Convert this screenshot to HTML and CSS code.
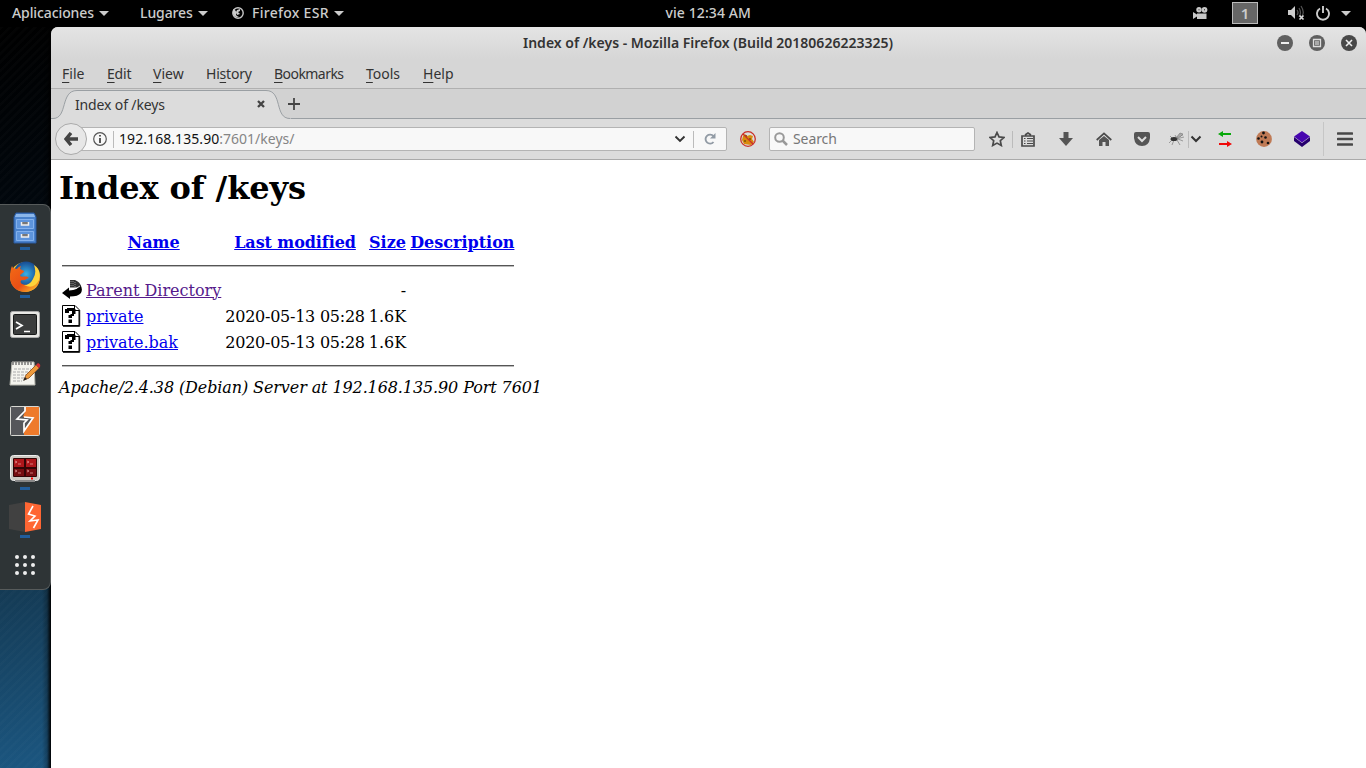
FILE: index.html
```html
<!DOCTYPE html>
<html lang="es">
<head>
<meta charset="utf-8">
<title>Index of /keys</title>
<link rel="stylesheet" href="styles.css">
</head>
<body>
<div class="desktop">
<header class="topbar">
  <div class="panel-left">
    <span class="panel-item apps">Aplicaciones<i class="caret"></i></span>
    <span class="panel-item places">Lugares<i class="caret"></i></span>
    <span class="panel-item current"><svg class="ff-mini" width="12" height="12" viewBox="0 0 12 12"><circle cx="6" cy="6" r="5.2" fill="none" stroke="#c8c8c8" stroke-width="1.4"/><path d="M1 3C0 9 4 11 7 10C4 9 3 7 5 6L3 3L1 2Z" fill="#ccc"/><path d="M5 3L8 2L8 4L6 5L8 7L5 8L4 5Z" fill="#ccc"/></svg><span>Firefox ESR</span><i class="caret"></i></span>
  </div>
  <div class="clock">vie 12:34 AM</div>
  <div class="panel-right">
    <svg class="cam" width="17" height="14" viewBox="0 0 17 14" fill="#c8c8c8"><circle cx="7" cy="3.800" r="2.700"/><circle cx="12.500" cy="3.800" r="2.900"/><path d="M5 7.500H14.500V13H5V10.500L1 13V6L5 8.500Z"/><path d="M6.500 3.800h1M12 3.800h1" stroke="#222"/></svg>
    <span class="workspace">1</span>
    <svg class="vol" width="18" height="16" viewBox="0 0 18 16"><path d="M1 5H4L8 1V14L4 10H1Z" fill="#ccc"/><path d="M10 5Q12 7.500 10 10M12 3Q15 7.500 12 12M14 1Q18 7 15 11" fill="none" stroke="#555" stroke-width="1.2"/><path d="M12.500 10.500L16.500 14.500M16.500 10.500L12.500 14.500" stroke="#ddd" stroke-width="1.7"/></svg>
    <svg class="power" width="14" height="15" viewBox="0 0 14 15"><path d="M4 2.500A6 6 0 1 0 10 2.500M7 0V7" fill="none" stroke="#ccc" stroke-width="1.9"/></svg>
    <i class="caret"></i>
  </div>
</header>
<div class="work">
<aside class="side">
 <nav class="dock">
  <div class="slot on"><svg class="files" width="24" height="32" viewBox="0 0 24 32"><path d="M3 1H21L23 5V31H1V5Z" fill="#4a82cc" stroke="#2858a0"/><path d="M3 2H21L22 5H2Z" fill="#8bb6ea"/><path d="M3.500 7.500H20.500V16.500H3.500ZM3.500 19.500H20.500V28.500H3.500Z" fill="#5d94dc" stroke="#83b1ed"/><path d="M8.500 10V13H15.500V10M8.500 22V25H15.500V22" fill="#777" stroke="#eee" stroke-width="1.5"/></svg></div>
  <div class="slot on"><svg width="32" height="32" viewBox="0 0 32 32"><defs><linearGradient id="fox" x2="1" y2="1"><stop stop-color="#f36a15"/><stop offset=".55" stop-color="#e94f16"/><stop offset="1" stop-color="#ffd231"/></linearGradient><radialGradient id="globe"><stop stop-color="#39b1e6"/><stop offset="1" stop-color="#174a91"/></radialGradient></defs><circle cx="16" cy="16" r="14.800" fill="#ffc52c"/><circle cx="17" cy="13" r="12.500" fill="url(#globe)"/><path d="M3 5Q1 9 1 17C2 27 9 31 17 31C26 30 31 24 31 16C28 24 22 26 17 24C12 24 10 20 13 19C17 20 18 17 20 17C17 14 14 17 11 15C12 12 15 12 15 10L11 8L12 5Q9 6 8 8L4 7Z" fill="url(#fox)"/><path d="M25 4Q28 12 24 18Q21 24 15 24Q25 29 30 19Q33 9 25 4Z" fill="#ffd43a"/></svg></div>
  <div class="slot"><svg class="term" width="30" height="27" viewBox="0 0 30 27"><rect x=".5" y=".5" width="29" height="26" rx="2" fill="#e8e8e5" stroke="#aaa"/><rect x="3.500" y="3.500" width="23" height="20" rx="1" fill="#3b3d3d" stroke="#171919"/><path d="M6 11L12 14.500L6 18M14 20.500H20" fill="none" stroke="#fff" stroke-width="1.700"/></svg></div>
  <div class="slot"><svg width="32" height="26" viewBox="0 0 32 26"><path d="M3 2H25L26 25H1Z" fill="#f4f4ee" stroke="#b8b8b0"/><path d="M4 1V5M7 1V5M10 1V5M13 1V5M16 1V5M19 1V5M22 1V5" stroke="#777" stroke-width="1.500"/><path d="M5 9H22M4 12H21M4 15H18M4 18H15M4 21H13" stroke="#aaa" stroke-dasharray="3 1"/><path d="M15 20L17 15L27 5L30 8L20 18Z" fill="#ed9a3b" stroke="#9c602d"/><path d="M27 5L29 3Q32 4 31 7L30 8Z" fill="#d42d32"/><path d="M14 21L16 17L18 19Z" fill="#222"/></svg></div>
  <div class="slot"><svg width="30" height="30" viewBox="0 0 30 30"><path d="M1 1H29V29H1Z" fill="#ee7a2b"/><path d="M1 1H15V5L13 11L23 12L14 25V29H1Z" fill="#55565a"/><path d="M15 1V5L7 13L17 14L14 17V25L23 12L14 11" fill="none" stroke="#fff" stroke-width="1.700"/><rect x=".5" y=".5" width="29" height="29" rx="1" fill="none" stroke="#d7d7d2"/></svg></div>
  <div class="slot on"><svg width="30" height="28" viewBox="0 0 30 28"><rect x=".5" y=".5" width="29" height="25" rx="3" fill="#ccc9c2" stroke="#eee"/><rect x="3" y="3" width="24" height="19" rx="1" fill="#330506"/><path d="M4 4H14V12H4ZM16 4H26V12H16Z" fill="#ad171b"/><path d="M4 14H14V21H4ZM16 14H26V21H16Z" fill="#750d10"/><path d="M5 6L7 7L5 8M8 9H11M17 6L19 7L17 8M20 9H23M5 15L7 16L5 17M8 18H11M17 15L19 16L17 17M20 18H23" fill="none" stroke="#eba8a8" stroke-width=".7"/><path d="M5 26H25" stroke="#888" stroke-width="2"/><path d="M21 23.500H23" stroke="#f00" stroke-width="2"/></svg></div>
  <div class="slot on"><svg width="32" height="30" viewBox="0 0 32 30"><path d="M0 3L16 0V30L0 27Z" fill="#414141"/><path d="M16 0L32 3V27L16 30Z" fill="#ff6633"/><path d="M24 4L19.500 12L26 14L21 19L29 18L24.500 26" fill="none" stroke="#fff" stroke-width="1.600"/></svg></div>
  <div class="slot"><svg width="20" height="20" viewBox="0 0 20 20" fill="#eee"><circle cx="2" cy="2" r="2"/><circle cx="10" cy="2" r="2"/><circle cx="18" cy="2" r="2"/><circle cx="2" cy="10" r="2"/><circle cx="10" cy="10" r="2"/><circle cx="18" cy="10" r="2"/><circle cx="2" cy="18" r="2"/><circle cx="10" cy="18" r="2"/><circle cx="18" cy="18" r="2"/></svg></div>
 </nav>
</aside>
<main class="window">
 <div class="titlebar"><span class="title">Index of /keys - Mozilla Firefox (Build 20180626223325)</span>
  <div class="controls"><svg viewBox="0 0 16 16"><circle cx="8" cy="8" r="8" fill="#606060"/><path d="M4 8H12" stroke="#eee" stroke-width="2"/></svg><svg viewBox="0 0 16 16"><circle cx="8" cy="8" r="8" fill="#606060"/><path d="M4.500 4.500H11.500V11.500H4.500Z" fill="none" stroke="#ddd" stroke-width="1.300"/><path d="M6 6H10V10H6Z" fill="#aaa"/></svg><svg viewBox="0 0 16 16"><circle cx="8" cy="8" r="8" fill="#484848"/><path d="M5 5L11 11M11 5L5 11" stroke="#eee" stroke-width="1.600"/></svg></div>
 </div>
 <nav class="menubar"><span class="m1"><u>F</u>ile</span><span class="m2"><u>E</u>dit</span><span class="m3"><u>V</u>iew</span><span class="m4">Hi<u>s</u>tory</span><span class="m5"><u>B</u>ookmarks</span><span class="m6"><u>T</u>ools</span><span class="m7"><u>H</u>elp</span></nav>
 <div class="tabs"><div class="tab">
   <svg class="tab-shape" width="240" height="32" viewBox="0 0 240 32"><path d="M0 30.500H2C17 30.500 9 2.500 26 2.500H215C232 2.500 223 30.500 239 30.500H240V32H0Z" fill="#dcdcdc"/><path d="M0 30.500H2C17 30.500 9 2.500 26 2.500H215C232 2.500 223 30.500 239 30.500" fill="none" stroke="#9a9fa3"/></svg>
   <span class="tab-label">Index of /keys</span><svg class="tab-close" width="8" height="8" viewBox="0 0 8 8"><path d="M1 1L7 7M7 1L1 7" stroke="#444" stroke-width="2.300"/></svg></div>
   <svg class="plus" width="12" height="12" viewBox="0 0 12 12"><path d="M6 0V12M0 6H12" stroke="#444" stroke-width="1.800"/></svg></div>
 <div class="toolbar">
  <span class="back"><svg width="14" height="14" viewBox="0 0 14 14"><path d="M7 1L2 7L7 13M2 7H14" fill="none" stroke="#444" stroke-width="3.400"/></svg></span>
  <div class="url"><svg class="info" width="14" height="14" viewBox="0 0 14 14"><circle cx="7" cy="7" r="6.300" fill="none" stroke="#555" stroke-width="1.200"/><path d="M7 6V11M7 3V4.600" stroke="#444" stroke-width="1.800"/></svg><i class="sep"></i><span class="address-text"><b>192.168.135.90</b>:7601/keys/</span><svg class="drop" width="12" height="8" viewBox="0 0 12 8"><path d="M1.500 1.500L6 6L10.500 1.500" fill="none" stroke="#333" stroke-width="1.900"/></svg><i class="sep"></i><svg class="reload" width="12" height="12" viewBox="0 0 12 12"><path d="M9.500 9A4.500 4.500 0 1 1 9.500 3.200" fill="none" stroke="#929ba5" stroke-width="1.900"/><path d="M11.500 0V5.500H6Z" fill="#929ba5"/></svg></div>
  <svg class="blocked" width="16" height="16" viewBox="0 0 16 16"><path d="M3 5L5 3L7 5L10 4L13 5L12 8L14 11L11 14L4 13L2 9Z" fill="#d98a0d"/><path d="M5 5H7M9 8H11M4 10H6" stroke="#795109" stroke-width="1.500"/><circle cx="8" cy="8" r="7.300" fill="none" stroke="#cb3029" stroke-width="1.300"/><path d="M3 3L13 13" stroke="#cb3029" stroke-width="1.300"/></svg>
  <div class="search"><svg width="14" height="14" viewBox="0 0 14 14"><circle cx="5.500" cy="5.500" r="4.300" fill="none" stroke="#999" stroke-width="2"/><path d="M8.500 8.500L13 13" stroke="#999" stroke-width="2.500"/></svg><span>Search</span></div>
  <div class="tools">
   <svg class="star" width="16" height="16" viewBox="0 0 16 16"><path d="M8 1.500L10 5.900L15 6.400L11.300 9.700L12.300 14.500L8 12.100L3.700 14.500L4.700 9.700L1 6.400L6 5.900Z" fill="none" stroke="#4a4a4a" stroke-width="1.700"/></svg><i class="sep"></i>
   <svg class="list" width="14" height="15" viewBox="0 0 14 15"><path d="M1 4H13V14H1ZM4 3L7 1L10 3" fill="none" stroke="#4a4a4a" stroke-width="1.700"/><path d="M3 6.500H4.500M6 6.500H12M3 9H4.500M6 9H12M3 11.500H4.500M6 11.500H12" stroke="#4a4a4a" stroke-width="1.200"/></svg>
   <svg class="down" width="14" height="14" viewBox="0 0 14 14"><path d="M4.500 0H9.500V6H14L7 14L0 6H4.500Z" fill="#555"/></svg>
   <svg class="home" width="16" height="15" viewBox="0 0 16 15"><path d="M.7 8L8 1.300L15.300 8" fill="none" stroke="#4a4a4a" stroke-width="1.700"/><path d="M3 8L8 4L13 8V14H9.500V10H6.500V14H3Z" fill="#555"/></svg>
   <svg class="pocket" width="16" height="14" viewBox="0 0 16 14"><path d="M2 0H14Q16 0 16 2V6Q15 14 8 14Q1 14 0 6V2Q0 0 2 0Z" fill="#555"/><path d="M4 5L8 9L12 5" fill="none" stroke="#ddd" stroke-width="2"/></svg>
   <svg class="fly" width="16" height="14" viewBox="0 0 16 14"><path d="M3 8L8 5L14 3M7 7L15 5M1 4L4 7L0 11M5 8L3 13M8 8L11 13M9 7L14 9M7 5L6 3" fill="none" stroke="#888" stroke-width=".8"/><ellipse cx="5" cy="7" rx="3.500" ry="2" fill="#333"/><path d="M7 6L11 1L14 2L11 5Z" fill="#aaa" stroke="#777" stroke-width=".6"/></svg><i class="sep small"></i>
   <svg class="chev" width="12" height="8" viewBox="0 0 12 8"><path d="M1.500 1.500L6 6L10.500 1.500" fill="none" stroke="#333" stroke-width="2"/></svg>
   <svg class="arrows" width="14" height="16" viewBox="0 0 14 16"><path d="M0 3L5 0V2H13V4H5V6Z" fill="#09a90c"/><path d="M14 13L9 10V12H1V14H9V16Z" fill="#ef0909"/></svg>
   <svg class="cookie" width="16" height="16" viewBox="0 0 16 16" fill="#111"><circle cx="8" cy="8" r="7.900" fill="#bf7a55"/><circle cx="7.500" cy="2" r="1.400"/><circle cx="2.500" cy="7.500" r="1.300"/><circle cx="9.500" cy="6.500" r="1.300"/><circle cx="6" cy="11" r="1.400"/><circle cx="12" cy="12" r="1.300"/><circle cx="5.500" cy="5.500" r="1"/></svg>
   <svg class="cube" width="16" height="16" viewBox="0 0 16 16"><path d="M0 6L8 12L16 6V10L8 16L0 10Z" fill="#26006e"/><path d="M8 0L16 5.500L8 11.500L0 5.500Z" fill="#4705af"/></svg>
   <i class="sep tall"></i><svg class="burger" width="16" height="14" viewBox="0 0 16 14"><path d="M1 1.500H15M1 7H15M1 12.500H15" stroke="#484848" stroke-width="2.700" stroke-linecap="round"/></svg>
  </div>
 </div>
 <section class="page">
  <h1>Index of /keys</h1>
  <table>
   <tr><th class="icon-cell"></th><th><a href="#">Name</a></th><th><a class="modified" href="#">Last modified</a></th><th><a href="#">Size</a></th><th><a href="#">Description</a></th></tr>
   <tr><td colspan="5"><hr></td></tr>
   <tr><td class="icon-cell"><svg width="20" height="22" viewBox="0 0 20 22"><path d="M0 14L7 8.500V11.500Q16 11 18.500 6Q21 10 19 14Q16 17.500 8 17.500V20Z"/><path d="M8 1H13Q18 3 19 7L17 9L14 8.500L8 8.500Z" fill="#333"/><path d="M9 2V8M11 2V8M13 3V8" stroke="#aaa" stroke-width=".8" stroke-dasharray="1 1"/><path d="M9 10.300Q15 10 18 7" stroke="#fff" stroke-width=".8" fill="none"/></svg></td><td><a class="visited" href="#">Parent Directory</a></td><td></td><td class="num">-</td><td></td></tr>
   <tr><td class="icon-cell"><svg width="20" height="22" viewBox="0 0 20 22"><path d="M.5 .5H13L17 4.500V20.500H.5V.5Z" fill="#fff" stroke="#000"/><path d="M12.500 1V5.500H17M1 21.300H17.700V5" fill="none" stroke="#000"/><path d="M3 4H5V3H12V4H13.500V9H12V11H10V13H6.500V10H8.500V9H10V6H7V8H3ZM6.500 14.500H10V18H6.500Z"/></svg></td><td><a href="#">private</a></td><td class="num date">2020-05-13 05:28</td><td class="num">1.6K</td><td></td></tr>
   <tr><td class="icon-cell"><svg width="20" height="22" viewBox="0 0 20 22"><path d="M.5 .5H13L17 4.500V20.500H.5V.5Z" fill="#fff" stroke="#000"/><path d="M12.500 1V5.500H17M1 21.300H17.700V5" fill="none" stroke="#000"/><path d="M3 4H5V3H12V4H13.500V9H12V11H10V13H6.500V10H8.500V9H10V6H7V8H3ZM6.500 14.500H10V18H6.500Z"/></svg></td><td><a href="#">private.bak</a></td><td class="num date">2020-05-13 05:28</td><td class="num">1.6K</td><td></td></tr>
   <tr><td colspan="5"><hr></td></tr>
  </table>
  <address>Apache/2.4.38 (Debian) Server at 192.168.135.90 Port 7601</address>
 </section>
</main>
</div>
</div>
</body>
</html>
```

FILE: styles.css
```css
*{box-sizing:border-box}
body{margin:0;background:#000;font:14px/20px "Noto Sans","Open Sans",sans-serif;overflow:hidden}
svg{display:block;flex:none}
.desktop{width:1366px;height:768px;display:flex;flex-direction:column}
.topbar{height:27px;flex:none;background:#000;color:#ccc;display:grid;grid-template-columns:1fr auto 1fr;align-items:center;font-weight:500;padding-bottom:1px}
.panel-left{display:flex;padding-left:12px}
.panel-item{display:flex;align-items:center;white-space:nowrap}
.apps{width:128px;letter-spacing:-.1px}.places{width:92px;letter-spacing:-.1px}
.current{letter-spacing:.28px}
.ff-mini{margin-right:8px}
.caret{border:5px solid transparent;border-top-color:#ccc;border-bottom:0;margin-left:5px;flex:none}
.clock{width:86px;margin-left:51px;white-space:nowrap;letter-spacing:.1px}
.panel-right{display:flex;align-items:center;justify-content:flex-end;padding-right:15px}
.workspace{width:26px;height:22px;border:1px solid #bbb;background:#666;text-align:center;margin:0 29px 0 23px;font-size:15px;font-weight:600}
.vol{margin-right:11px}.panel-right .caret{margin-left:11px}
.work{display:flex;flex:1;min-height:0}
.side{width:51px;flex:none;padding-top:177px;background:linear-gradient(90deg,transparent 42px,rgba(0,0,0,.25) 47px,#000 51px),repeating-linear-gradient(135deg,rgba(255,255,255,.015) 0 2px,transparent 3px 6px),linear-gradient(172deg,#000 0%,#01070d 24%,#143a54 75%,#1b5680 100%)}
.dock{width:51px;height:386px;background:#2e3436;border:1px solid #575b5b;border-left:0;border-radius:0 8px 8px 0}
.slot{height:48px;width:50px;display:flex;align-items:center;justify-content:center;position:relative}
.files,.term{margin-bottom:2px}
.on::after{content:"";position:absolute;width:10px;height:3px;left:20px;top:42px;background:#215d9c}
.window{flex:1;display:flex;flex-direction:column;min-width:0;background:#d6d6d6;border-radius:7px 7px 0 0;overflow:hidden;color:#333}
.titlebar{height:32px;flex:none;display:flex;align-items:center;background:linear-gradient(#e4e4e4,#d6d6d6);font-weight:600;padding-left:472px}
.title{width:370px;white-space:nowrap}
.controls{display:flex;gap:16px;margin-left:auto;padding-right:9px}.controls svg{width:16px;height:16px}
.menubar{height:30px;flex:none;border-bottom:1px solid #b0b0b0;display:flex;padding:5px 0 0 11px;white-space:nowrap}
.menubar u{text-underline-offset:3px}
.m1{width:45px}.m2{width:46px;letter-spacing:-.2px}.m3{width:53px}.m4{width:68px;letter-spacing:-.2px}.m5{width:92px;letter-spacing:-.55px}.m6{width:57px}
.tabs{height:30px;flex:none;display:flex;align-items:center;background:#d2d2d2;box-shadow:inset 0 -1px #9a9fa3}
.tab{height:30px;width:236px;display:flex;align-items:center;position:relative}
.tab-shape{position:absolute;left:0;top:-1px}
.tab-label{position:relative;width:182px;margin-left:24px;padding-top:1px;letter-spacing:-.14px}.tab-close{position:relative}
.plus{margin-left:1px}
.toolbar{height:41px;flex:none;display:flex;align-items:center;background:#dcdcdc;border-bottom:1px solid #aaa;padding-left:4px}
.back{width:32px;height:32px;border:1px solid #aaa;border-radius:50%;background:#e7e7e7;display:flex;align-items:center;justify-content:center;z-index:1;flex:none}
.url{height:24px;width:648px;margin-left:-8px;border:1px solid #b4b4b4;background:#f8f8f8;display:flex;align-items:center;padding-left:13px;border-radius:0 2px 2px 0;flex:none}
.sep{width:1px;height:17px;background:#bbb;flex:none}
.info{margin-right:6px}.address-text{width:556px;padding-left:5px;color:#858585;white-space:nowrap}.address-text b{font-weight:400;color:#111;letter-spacing:.07px}
.drop{margin:0 7px 0 4px}.reload{margin-left:10px}
.blocked{margin:0 13px}
.search{height:24px;width:206px;border:1px solid #b4b4b4;border-radius:2px;background:#f8f8f8;display:flex;align-items:center;padding-left:4px;color:#777;flex:none}
.search span{margin-left:5px;letter-spacing:-.1px}
.tools{display:flex;align-items:center}
.star{margin:0 7px 0 14px}.list{margin-left:8px}.down{margin-left:24px}.home{margin-left:23px}.pocket{margin-left:22px}.fly{margin:0 3px 0 19px}.small{height:17px}.chev{margin-left:1px}.arrows{margin-left:16px}.cookie{margin-left:24px}.cube{margin-left:22px}.tall{height:34px;background:#c6c6c6;margin-left:13px}.burger{margin-left:13px}
.page{flex:1;background:#fff;color:#000;padding:8px;font:16px/19px "DejaVu Serif",serif}
h1{font-size:32px;line-height:38px;margin:0 0 21px;padding-top:1px;letter-spacing:-.1px}
table{border-collapse:separate;border-spacing:2px}
td,th{padding:1px;white-space:nowrap}
.icon-cell{height:24px}
th{text-align:center}
hr{margin:8px 0;border:0;border-top:1px solid #555;border-bottom:1px solid #bbb}
a{color:#00e}.visited{color:#551a8b}
.modified{letter-spacing:-.09px}
.num{text-align:right}
.date{letter-spacing:-.25px}
address{font-style:italic;letter-spacing:-.105px}
```
